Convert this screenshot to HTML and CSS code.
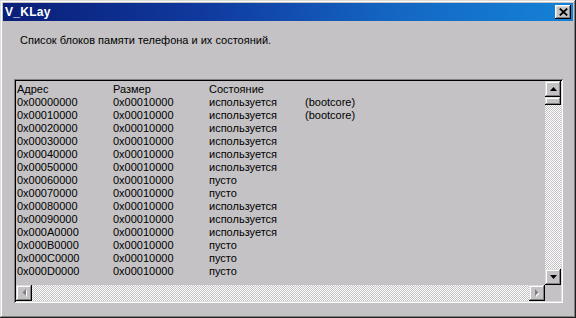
FILE: index.html
```html
<!DOCTYPE html>
<html>
<head>
<meta charset="utf-8">
<link rel="stylesheet" href="styles.css">
</head>
<body>
<div class="window">
  <div class="titlebar">
    <span class="title">V_KLay</span>
    <div class="close"><svg width="9" height="8" viewBox="0 0 9 8"><path d="M0.8 0.6 L8.2 7.4 M8.2 0.6 L0.8 7.4" stroke="#000" stroke-width="1.8" fill="none"/></svg></div>
  </div>
  <p class="desc">Список блоков памяти телефона и их состояний.</p>
  <div class="listbox">
    <div class="content">
      <div class="row"><span>Адрес</span><span>Размер</span><span>Состояние</span><span></span></div>
      <div class="row"><span>0x00000000</span><span>0x00010000</span><span>используется</span><span>(bootcore)</span></div>
      <div class="row"><span>0x00010000</span><span>0x00010000</span><span>используется</span><span>(bootcore)</span></div>
      <div class="row"><span>0x00020000</span><span>0x00010000</span><span>используется</span><span></span></div>
      <div class="row"><span>0x00030000</span><span>0x00010000</span><span>используется</span><span></span></div>
      <div class="row"><span>0x00040000</span><span>0x00010000</span><span>используется</span><span></span></div>
      <div class="row"><span>0x00050000</span><span>0x00010000</span><span>используется</span><span></span></div>
      <div class="row"><span>0x00060000</span><span>0x00010000</span><span>пусто</span><span></span></div>
      <div class="row"><span>0x00070000</span><span>0x00010000</span><span>пусто</span><span></span></div>
      <div class="row"><span>0x00080000</span><span>0x00010000</span><span>используется</span><span></span></div>
      <div class="row"><span>0x00090000</span><span>0x00010000</span><span>используется</span><span></span></div>
      <div class="row"><span>0x000A0000</span><span>0x00010000</span><span>используется</span><span></span></div>
      <div class="row"><span>0x000B0000</span><span>0x00010000</span><span>пусто</span><span></span></div>
      <div class="row"><span>0x000C0000</span><span>0x00010000</span><span>пусто</span><span></span></div>
      <div class="row"><span>0x000D0000</span><span>0x00010000</span><span>пусто</span><span></span></div>
    </div>
    <div class="vscroll">
      <div class="btn"><svg width="7" height="4" viewBox="0 0 7 4"><polygon points="3.5,0 7,4 0,4" fill="#000"/></svg></div>
      <div class="thumb"></div>
      <div class="track"></div>
      <div class="btn"><svg width="7" height="4" viewBox="0 0 7 4"><polygon points="0,0 7,0 3.5,4" fill="#000"/></svg></div>
    </div>
    <div class="hscroll">
      <div class="btn"><svg width="5" height="8" viewBox="0 0 5 8"><polygon points="5,1 5,8 1.5,4.5" fill="#fff"/><polygon points="4,0 4,7 0.5,3.5" fill="#808080"/></svg></div>
      <div class="track"></div>
      <div class="btn"><svg width="5" height="8" viewBox="0 0 5 8"><polygon points="1,1 1,8 4.5,4.5" fill="#fff"/><polygon points="0,0 0,7 3.5,3.5" fill="#808080"/></svg></div>
    </div>
    <div class="corner"></div>
  </div>
</div>
</body>
</html>
```
FILE: styles.css
```css
html, body {
  margin: 0;
  padding: 0;
  background: #c4c2c4;
}
.window {
  width: 576px;
  height: 318px;
  box-sizing: border-box;
  padding: 3px;
  background: #c4c2c4;
  box-shadow: inset -1px -1px #202020, inset 1px 1px #dcdcdc, inset -2px -2px #808080, inset 2px 2px #ffffff;
  font-family: "Liberation Sans", Arial, sans-serif;
  font-size: 11px;
  color: #000;
}
.titlebar {
  height: 18px;
  display: flex;
  align-items: center;
  justify-content: space-between;
  background: linear-gradient(to right, #0a1e78, #10399e 35%, #1468c4 70%, #1482d6);
  padding: 0 2px 0 2px;
}
.title {
  color: #fff;
  font-weight: bold;
  font-size: 12px;
  line-height: 18px;
  letter-spacing: 0.3px;
}
.close {
  width: 16px;
  height: 14px;
  box-sizing: border-box;
  display: flex;
  align-items: center;
  justify-content: center;
  background: #c4c2c4;
  box-shadow: inset -1px -1px #000, inset 1px 1px #fff, inset -2px -2px #808080, inset 2px 2px #dcdcdc;
}
.desc {
  margin: 13px 0 0 0;
  padding-left: 17px;
  line-height: 13px;
}
.listbox {
  margin: 32px 0 0 11px;
  width: 549px;
  height: 224px;
  box-sizing: border-box;
  padding: 2px;
  box-shadow: inset 1px 1px #808080, inset -1px -1px #fff, inset 2px 2px #000, inset -2px -2px #dcdcdc;
  display: grid;
  grid-template-columns: 529px 16px;
  grid-template-rows: 204px 16px;
}
.content {
  padding: 2px 0 0 1px;
  overflow: hidden;
}
.row {
  display: grid;
  grid-template-columns: 96px 96px 96px 96px;
  line-height: 13px;
  white-space: nowrap;
}
.vscroll {
  display: flex;
  flex-direction: column;
}
.hscroll {
  display: flex;
}
.btn {
  width: 16px;
  height: 16px;
  flex: none;
  box-sizing: border-box;
  display: flex;
  align-items: center;
  justify-content: center;
  background: #c4c2c4;
  box-shadow: inset -1px -1px #000, inset 1px 1px #dcdcdc, inset -2px -2px #808080, inset 2px 2px #fff;
}
.thumb {
  height: 8px;
  flex: none;
  background: #c4c2c4;
  box-shadow: inset -1px -1px #000, inset 1px 1px #dcdcdc, inset -2px -2px #808080, inset 2px 2px #fff;
}
.track {
  flex: 1;
  background: repeating-conic-gradient(#ffffff 0 25%, #c4c2c4 0 50%) 0 0 / 2px 2px;
}
.corner {
  background: #c4c2c4;
}
```
